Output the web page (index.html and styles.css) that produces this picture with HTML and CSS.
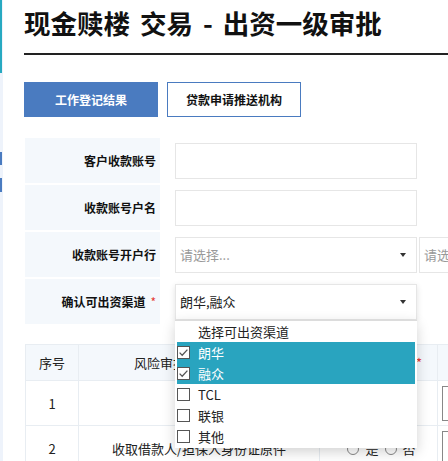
FILE: index.html
```html
<!DOCTYPE html>
<html lang="zh-CN">
<head>
<meta charset="utf-8">
<title>现金赎楼 交易 - 出资一级审批</title>
<link rel="stylesheet" href="styles.css">
</head>
<body>
<div class="page">
  <div class="edge">
    <div class="edge-top"></div>
    <div class="edge-mark mark-1"></div>
    <div class="edge-mark mark-2"></div>
  </div>
  <div class="main">
    <h1 class="title">现金赎楼 交易 - 出资一级审批</h1>
    <div class="tabs">
      <button class="btn btn-primary">工作登记结果</button>
      <button class="btn btn-outline">贷款申请推送机构</button>
    </div>

    <div class="form">
      <div class="form-row">
        <div class="label">客户收款账号</div>
        <div class="field"><div class="input"></div></div>
      </div>
      <div class="form-row">
        <div class="label">收款账号户名</div>
        <div class="field"><div class="input"></div></div>
      </div>
      <div class="form-row">
        <div class="label">收款账号开户行</div>
        <div class="field">
          <div class="select"><span class="placeholder">请选择...</span><span class="caret"></span></div>
          <div class="select select-second"><span class="placeholder">请选择...</span><span class="caret"></span></div>
        </div>
      </div>
      <div class="form-row">
        <div class="label">确认可出资渠道<span class="req">*</span></div>
        <div class="field">
          <div class="select-wrap">
            <div class="select select-open"><span class="value">朗华,融众</span><span class="caret"></span></div>
            <ul class="menu">
              <li class="menu-head">选择可出资渠道</li>
              <li class="menu-item active"><span class="cbox"><svg viewBox="0 0 13 13" width="13" height="13"><path d="M2.6 6.6 L5.2 9.2 L10.4 3.6" fill="none" stroke="#555" stroke-width="1.3"/></svg></span>朗华</li>
              <li class="menu-item active"><span class="cbox"><svg viewBox="0 0 13 13" width="13" height="13"><path d="M2.6 6.6 L5.2 9.2 L10.4 3.6" fill="none" stroke="#555" stroke-width="1.3"/></svg></span>融众</li>
              <li class="menu-item"><span class="cbox"></span>TCL</li>
              <li class="menu-item"><span class="cbox"></span>联银</li>
              <li class="menu-item"><span class="cbox"></span>其他</li>
            </ul>
          </div>
        </div>
      </div>
    </div>

    <table class="grid">
      <colgroup>
        <col class="c-no"><col class="c-item"><col class="c-check"><col class="c-note">
      </colgroup>
      <thead>
        <tr>
          <th>序号</th>
          <th>风险审批项及审核内容</th>
          <th>是否满足要求 <span class="req">*</span></th>
          <th>备注</th>
        </tr>
      </thead>
      <tbody>
        <tr>
          <td>1</td>
          <td></td>
          <td></td>
          <td class="note"><div class="note-box"></div></td>
        </tr>
        <tr>
          <td>2</td>
          <td>收取借款人/担保人身份证原件</td>
          <td><span class="radio"></span>是<span class="radio"></span>否</td>
          <td class="note"><div class="note-box"></div></td>
        </tr>
      </tbody>
    </table>
  </div>
</div>
</body>
</html>
```

FILE: styles.css
```css
html, body {
  margin: 0;
  padding: 0;
  background: #ffffff;
  overflow: hidden;
}

body {
  font-family: "Noto Sans CJK SC", "Liberation Sans", sans-serif;
  color: #222;
}

.page {
  display: flex;
  width: 760px;
  min-height: 461px;
}

.edge {
  width: 3px;
  flex: none;
  background: #eef3fb;
  display: flex;
  flex-direction: column;
}

.edge-top {
  height: 73px;
  width: 2px;
  background: #27a9c1;
}

.edge-mark {
  width: 2px;
  background: #4a7bc0;
}

.mark-1 {
  margin-top: 79px;
  height: 13px;
}

.mark-2 {
  margin-top: 13px;
  height: 14px;
}

.main {
  flex: 1;
  padding-left: 21px;
}

.title {
  margin: 0;
  padding-top: 5px;
  padding-bottom: 12px;
  font-size: 26.5px;
  line-height: 36px;
  font-weight: 700;
  color: #111;
  word-spacing: 4px;
  border-bottom: 2px solid #222;
}

.tabs {
  margin-top: 27px;
  display: flex;
  gap: 9px;
}

.btn {
  width: 134px;
  height: 35px;
  padding: 0;
  font-family: "Noto Sans CJK SC", "Liberation Sans", sans-serif;
  font-size: 12px;
  font-weight: 700;
  border: 1px solid #4a7bc0;
  cursor: pointer;
}

.btn-primary {
  background: #4a7bc0;
  color: #fff;
}

.btn-outline {
  background: #fff;
  color: #111;
}

.form {
  margin-top: 21px;
  margin-left: 1px;
  display: flex;
  flex-direction: column;
  gap: 2px;
}

.form-row {
  display: flex;
  height: 45px;
}

.label {
  width: 135px;
  flex: none;
  background: #f4f8fc;
  text-align: right;
  padding-right: 4px;
  box-sizing: border-box;
  font-size: 12px;
  font-weight: 700;
  line-height: 45px;
  color: #111;
}

.label .req {
  margin-left: 5px;
}

.req {
  color: #e53935;
  font-weight: 400;
}

.field {
  display: flex;
  align-items: center;
  padding-left: 15px;
}

.input {
  width: 242px;
  height: 36px;
  box-sizing: border-box;
  border: 1px solid #e6e6e6;
  background: #fff;
}

.select {
  width: 242px;
  height: 36px;
  box-sizing: border-box;
  border: 1px solid #e6e6e6;
  background: #fff;
  display: flex;
  align-items: center;
  justify-content: space-between;
  padding: 0 10px 0 4px;
  font-size: 13px;
}

.select-second {
  margin-left: 2px;
}

.placeholder {
  color: #999;
}

.value {
  color: #222;
}

.caret {
  width: 0;
  height: 0;
  border-left: 3px solid transparent;
  border-right: 3px solid transparent;
  border-top: 4px solid #333;
}

.select-wrap {
  position: relative;
}

.select-open {
  box-shadow: 0 2px 6px rgba(0, 0, 0, 0.12);
}

.menu {
  position: absolute;
  left: 0;
  top: 36px;
  z-index: 5;
  width: 242px;
  box-sizing: border-box;
  margin: 0;
  padding: 0 2px 1px 2px;
  list-style: none;
  background: #fff;
  border-top: 1px solid #dcdcdc;
  box-shadow: 0 4px 12px rgba(0, 0, 0, 0.18);
  font-size: 13px;
  color: #222;
}

.menu-head {
  height: 21px;
  line-height: 21px;
  padding-left: 21px;
}

.menu-item {
  height: 21px;
  display: flex;
  align-items: center;
  gap: 8px;
}

.menu-item.active {
  background: #29a4bf;
  color: #fff;
}

.cbox {
  width: 13px;
  height: 13px;
  box-sizing: border-box;
  border: 1px solid #555;
  background: #fff;
  display: flex;
  align-items: center;
  justify-content: center;
}

.cbox svg {
  display: block;
  flex: none;
}

.grid {
  margin-top: 20px;
  margin-left: 1px;
  border-collapse: collapse;
  table-layout: fixed;
  width: 612px;
  font-size: 13px;
  color: #222;
}

.c-no { width: 53px; }
.c-item { width: 241px; }
.c-check { width: 118px; }
.c-note { width: 200px; }

.grid th,
.grid td {
  border: 1px solid #e8edf2;
  text-align: center;
  padding: 0;
  font-weight: 400;
}

.grid thead th {
  height: 35px;
  background: #f4f8fc;
}

.grid tbody td {
  height: 44px;
}

.radio {
  display: inline-block;
  width: 12px;
  height: 12px;
  box-sizing: border-box;
  border: 1px solid #888;
  border-radius: 50%;
  vertical-align: -1px;
  margin: 0 6px 0 6px;
}

.grid td.note {
  text-align: left;
  padding-left: 4px;
}

.note-box {
  width: 180px;
  height: 35px;
  box-sizing: border-box;
  border: 1px solid #888;
}
```
